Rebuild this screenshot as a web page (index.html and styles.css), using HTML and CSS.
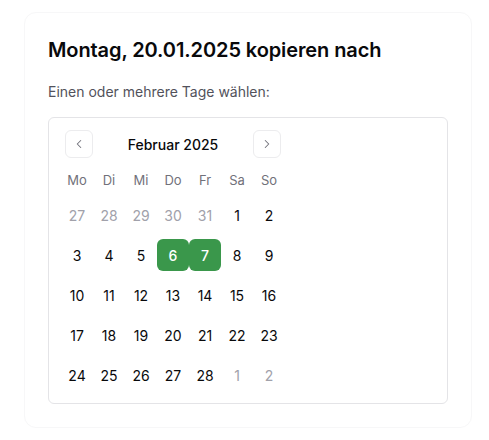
FILE: index.html
```html
<!DOCTYPE html>
<html lang="de">
  <head>
    <meta charset="utf-8" />
    <title>Tag kopieren</title>
    <link rel="stylesheet" href="styles.css">
  </head>
  <body>
    <div class="dialog">
      <h2 class="dialog-title">Montag, 20.01.2025 kopieren nach</h2>
      <p class="dialog-text">Einen oder mehrere Tage wählen:</p>

      <div class="calendar">
        <div class="cal-nav">
          <button class="nav-btn" aria-label="Vorheriger Monat">
            <svg width="14" height="14" viewBox="0 0 24 24" fill="none" stroke="currentColor" stroke-width="1.8" stroke-linecap="round" stroke-linejoin="round"><path d="M15 18l-6-6 6-6" /></svg>
          </button>
          <span class="cal-caption">Februar 2025</span>
          <button class="nav-btn" aria-label="Nächster Monat">
            <svg width="14" height="14" viewBox="0 0 24 24" fill="none" stroke="currentColor" stroke-width="1.8" stroke-linecap="round" stroke-linejoin="round"><path d="M9 18l6-6-6-6" /></svg>
          </button>
        </div>

        <div class="cal-head">
          <span>Mo</span><span>Di</span><span>Mi</span><span>Do</span><span>Fr</span><span>Sa</span><span>So</span>
        </div>

        <div class="cal-days">
          <span class="day outside">27</span>
          <span class="day outside">28</span>
          <span class="day outside">29</span>
          <span class="day outside">30</span>
          <span class="day outside">31</span>
          <span class="day">1</span>
          <span class="day">2</span>

          <span class="day">3</span>
          <span class="day">4</span>
          <span class="day">5</span>
          <span class="day selected">6</span>
          <span class="day selected">7</span>
          <span class="day">8</span>
          <span class="day">9</span>

          <span class="day">10</span>
          <span class="day">11</span>
          <span class="day">12</span>
          <span class="day">13</span>
          <span class="day">14</span>
          <span class="day">15</span>
          <span class="day">16</span>

          <span class="day">17</span>
          <span class="day">18</span>
          <span class="day">19</span>
          <span class="day">20</span>
          <span class="day">21</span>
          <span class="day">22</span>
          <span class="day">23</span>

          <span class="day">24</span>
          <span class="day">25</span>
          <span class="day">26</span>
          <span class="day">27</span>
          <span class="day">28</span>
          <span class="day outside">1</span>
          <span class="day outside">2</span>
        </div>
      </div>
    </div>
  </body>
</html>
```

FILE: styles.css
```css
:root {
  --text: #09090b;
  --muted: #71717a;
  --border: #e4e4e7;
  --selected: #3a974b;
}

body {
  margin: 0;
  background: #fff;
  font-family: Inter, "Noto Sans", sans-serif;
  color: var(--text);
}

.dialog {
  width: 400px;
  margin: 12px 0 0 24px;
  padding: 23px;
  border: 1px solid #f7f7f8;
  border-radius: 12px;
}

.dialog-title {
  margin: 0;
  font-size: 20px;
  line-height: 28px;
  font-weight: 600;
  letter-spacing: -0.1px;
}

.dialog-text {
  margin: 18px 0 0;
  font-size: 14px;
  line-height: 20px;
  color: #52525b;
}

.calendar {
  margin-top: 15px;
  padding: 12px;
  border: 1px solid var(--border);
  border-radius: 6px;
}

.cal-nav {
  width: 216px;
  padding: 0 4px;
  height: 28px;
  display: flex;
  align-items: center;
  justify-content: space-between;
}

.nav-btn {
  width: 28px;
  height: 28px;
  padding: 0;
  display: flex;
  align-items: center;
  justify-content: center;
  background: #fff;
  border: 1px solid #ececee;
  border-radius: 6px;
  color: #71717a;
}

.cal-caption {
  font-size: 14px;
  font-weight: 500;
}

.cal-head,
.cal-days {
  display: grid;
  grid-template-columns: repeat(7, 32px);
}

.cal-head {
  margin-top: 12px;
  height: 20px;
  line-height: 21px;
  font-size: 13px;
  color: var(--muted);
  text-align: center;
}

.cal-days {
  margin-top: 9px;
  row-gap: 8px;
}

.day {
  height: 32px;
  line-height: 33px;
  text-align: center;
  font-size: 14px;
  border-radius: 6px;
}

.day.outside {
  color: #a1a1aa;
}

.day.selected {
  background: var(--selected);
  color: #fff;
  font-weight: 500;
}
```
